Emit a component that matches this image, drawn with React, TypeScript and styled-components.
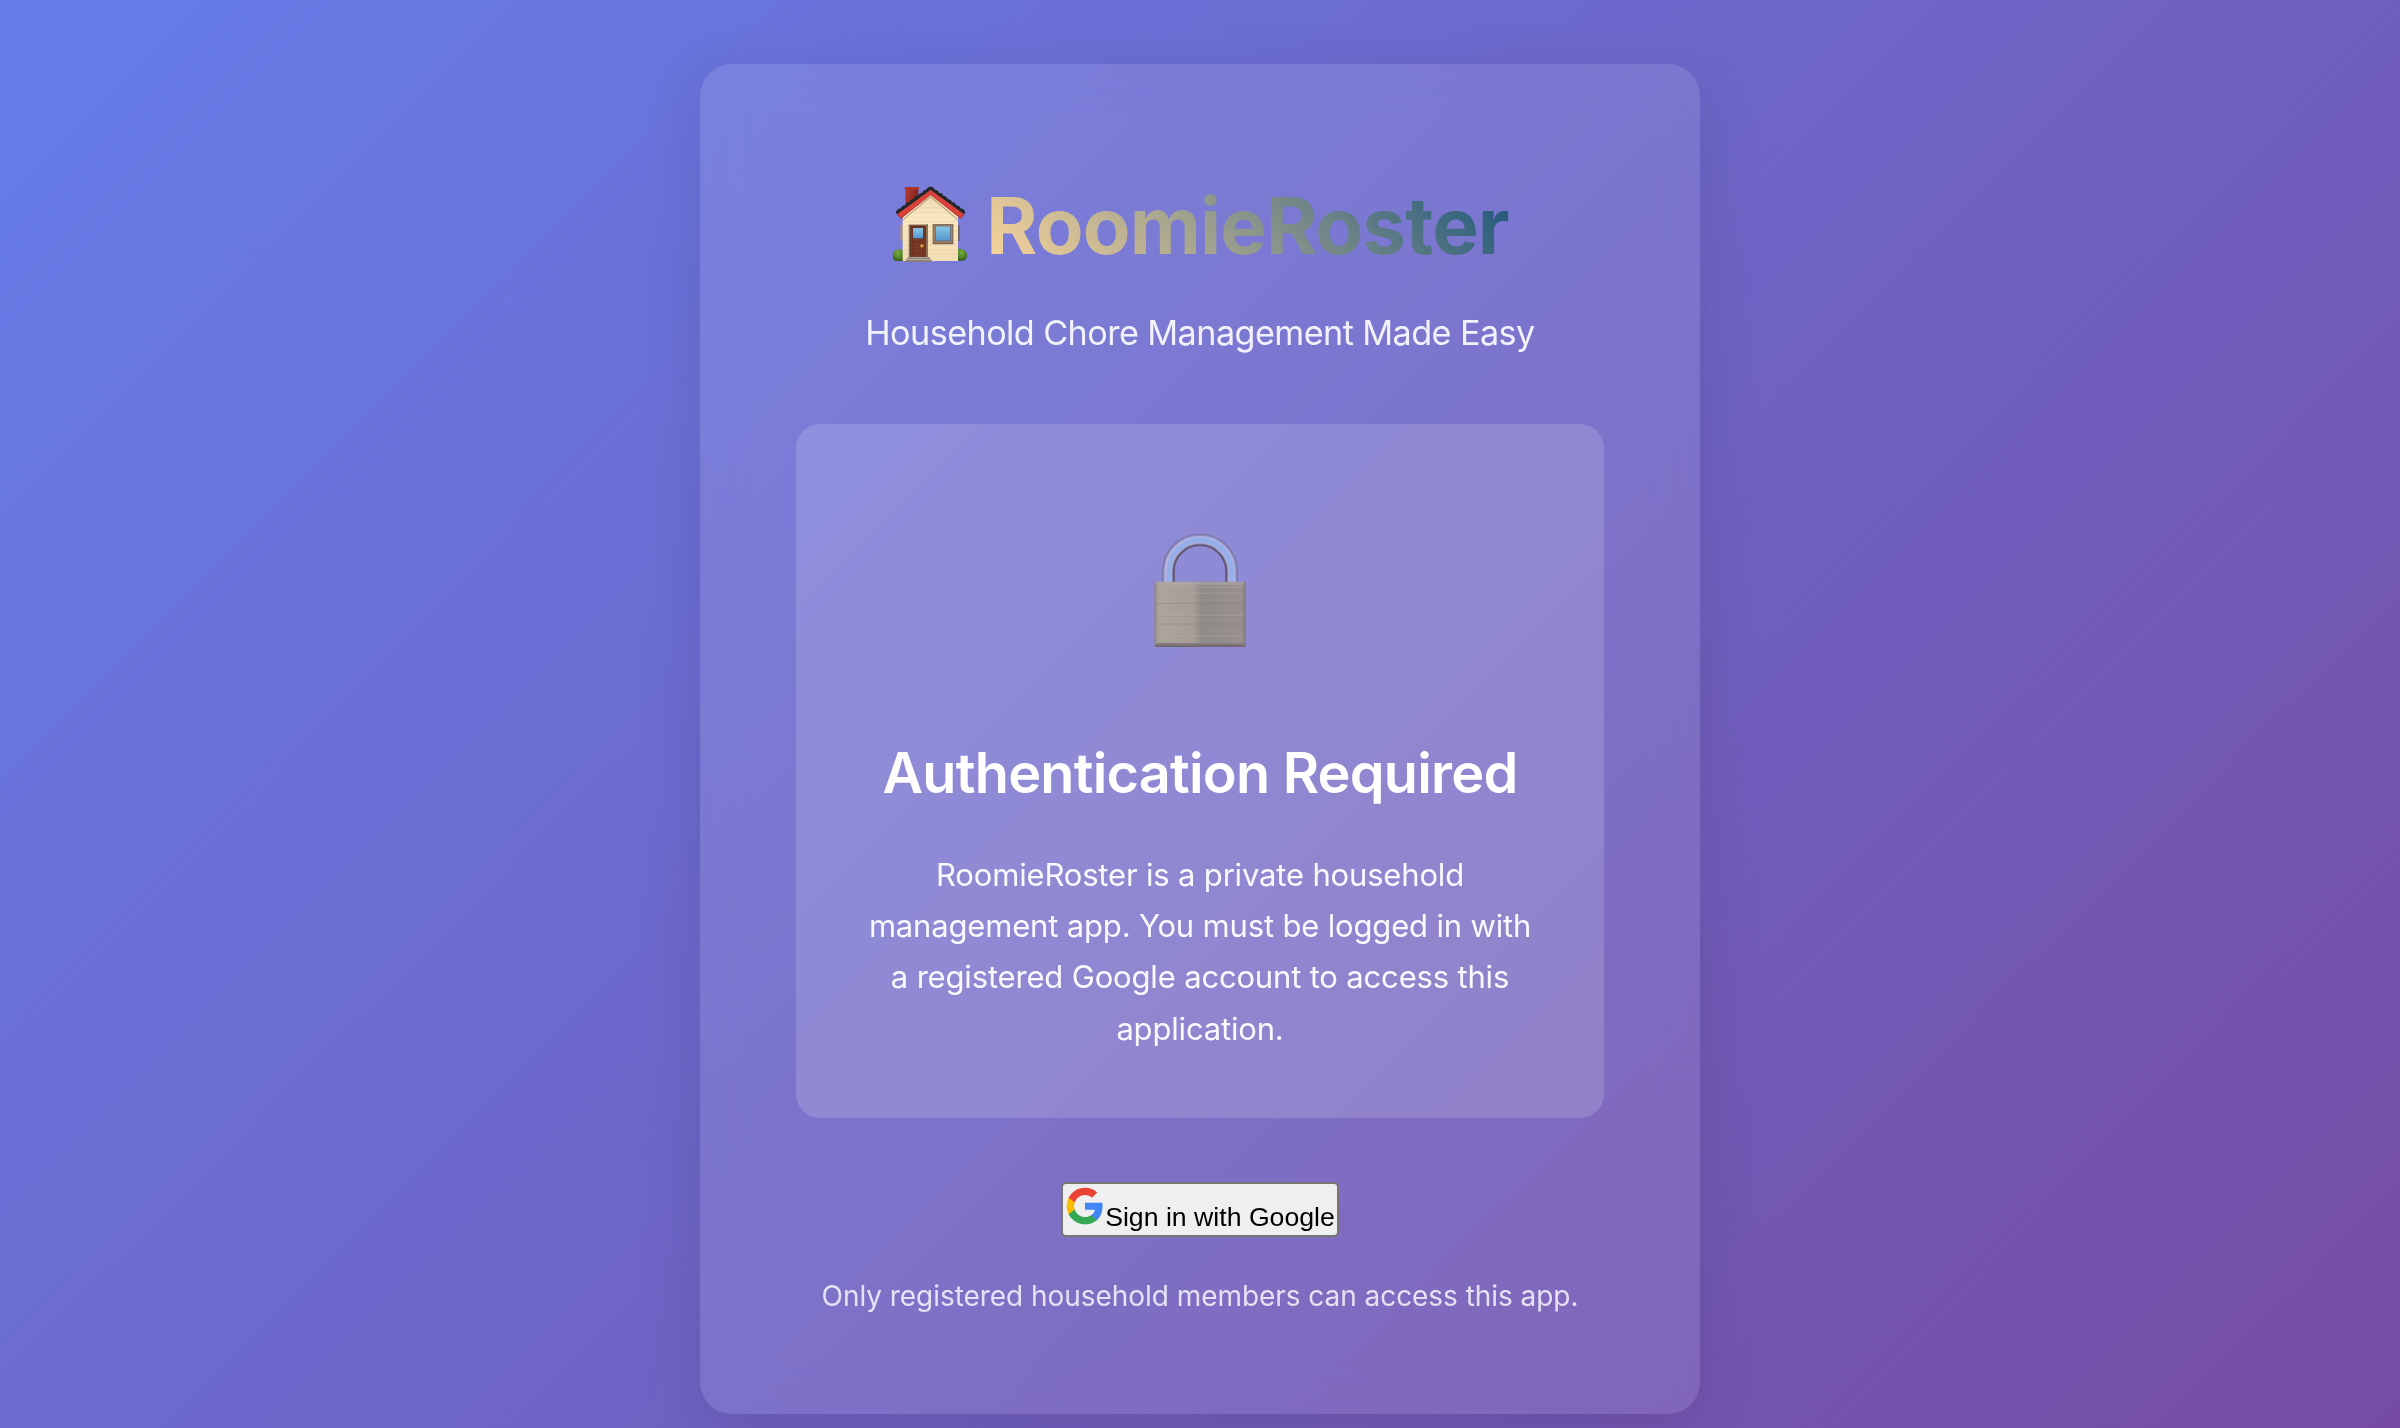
import React from 'react';
import styled, { createGlobalStyle } from 'styled-components';

const GlobalStyle = createGlobalStyle`
  *, *::before, *::after { box-sizing: border-box; }
  html, body { margin: 0; height: 100vh; overflow: hidden; }
  body { font-family: Inter, "Noto Sans", sans-serif; color: #fff; }
  h1, h2, p { margin: 0; }
`;

const Page = styled.div`
  display: flex;
  justify-content: center;
  align-items: flex-start;
  height: 1478px;
  padding: 64px;
  background: linear-gradient(135deg, #667eea 0%, #764ba2 100%);
`;

const Card = styled.main`
  display: flex;
  flex-direction: column;
  align-items: center;
  width: 1000px;
  height: 1350px;
  padding: 96px;
  border-radius: 32px;
  background: rgba(255, 255, 255, 0.1);
  backdrop-filter: blur(20px);
  box-shadow: 0 16px 64px rgba(0, 0, 0, 0.11);
  text-align: center;
`;

const Title = styled.h1`
  display: flex;
  justify-content: center;
  align-items: flex-start;
  gap: 15px;
  height: 128px;
  font-size: 78px;
  font-weight: 700;
  line-height: 132px;
  letter-spacing: -0.84px;
  white-space: nowrap;
`;

const HouseIcon = styled.svg`
  width: 80px;
  height: 84px;
  margin-top: 18px;
`;

const GradientText = styled.span`
  background: linear-gradient(45deg, #ffd89b 0%, #19547b 100%);
  background-clip: text;
  -webkit-background-clip: text;
  -webkit-text-fill-color: transparent;
`;

const Tagline = styled.p`
  margin-top: 17px;
  font-size: 34.2px;
  line-height: 56px;
  letter-spacing: -0.57px;
  color: rgba(255, 255, 255, 0.9);
`;

const Panel = styled.section`
  display: flex;
  flex-direction: column;
  align-items: center;
  width: 808px;
  height: 694px;
  margin-top: 63px;
  padding: 64px;
  border-radius: 24px;
  background: rgba(255, 255, 255, 0.15);
`;

const LockIcon = styled.svg`
  flex: none;
  width: 100px;
  height: 120px;
  margin: 42px 0 77px;
`;

const PanelTitle = styled.h2`
  font-size: 55.8px;
  font-weight: 600;
  line-height: 92px;
  letter-spacing: -0.77px;
  white-space: nowrap;
`;

const PanelText = styled.p`
  margin-top: 30px;
  font-size: 31px;
  line-height: 51.2px;
  letter-spacing: -0.17px;
  color: rgba(255, 255, 255, 0.95);
`;

const SignInButton = styled.button`
  margin-top: 64px;
  padding: 2px;
  border: 2px solid #767676;
  border-radius: 5px;
  background: #efefef;
  color: #000;
  font: 26.667px "Liberation Sans", Arial, sans-serif;
  white-space: nowrap;
`;

const GoogleLogo = styled.svg`
  width: 40px;
  height: 40px;
`;

const Note = styled.p`
  margin-top: 36px;
  font-size: 28px;
  line-height: 46px;
  letter-spacing: -0.05px;
  color: rgba(255, 255, 255, 0.8);
  white-space: nowrap;
`;

const House = () => (
  <HouseIcon viewBox="33 9 240 252" aria-hidden="true">
    <defs>
      <linearGradient id="chimney" x1="0" x2="1" y1="0" y2="0.4">
        <stop offset="0" stopColor="#bd3e33" />
        <stop offset="1" stopColor="#7c211d" />
      </linearGradient>
      <linearGradient id="wall" x1="0" x2="0" y1="0" y2="1">
        <stop offset="0" stopColor="#ecd9b0" />
        <stop offset="0.35" stopColor="#fbe8c2" />
        <stop offset="1" stopColor="#f3ddb4" />
      </linearGradient>
      <linearGradient id="glass" x1="0" x2="0" y1="0" y2="1">
        <stop offset="0" stopColor="#86c6e6" />
        <stop offset="1" stopColor="#5597cf" />
      </linearGradient>
      <radialGradient id="bush" cx="0.45" cy="0.3" r="0.75">
        <stop offset="0" stopColor="#7cab41" />
        <stop offset="0.6" stopColor="#4f8128" />
        <stop offset="1" stopColor="#2f5417" />
      </radialGradient>
    </defs>
    <path d="M38 243c0-11 6-19 15-19 5-4 18 0 20 10v24H50c-8 0-12-6-12-15z" fill="url(#bush)" />
    <path d="M230 224c6-5 15-3 19 0 8 1 12 9 12 16 0 10-5 17-12 17h-19z" fill="url(#bush)" />
    <rect x="61" y="150" width="8" height="47" fill="#a58d8b" />
    <rect x="232" y="150" width="7" height="48" fill="#6d5e66" />
    <rect x="76" y="38" width="39" height="62" fill="url(#chimney)" />
    <rect x="74" y="36" width="43" height="8" rx="2" fill="#a93429" />
    <path d="M68 122 152 54l82 68v136H68z" fill="url(#wall)" />
    <path
      d="M120 98h64M103 112h98M86 126h130M69 140h164M69 154h164M69 168h164M69 182h164M69 196h164M69 210h164M69 224h164M69 238h164"
      stroke="#dfca9e"
      strokeWidth="1.2"
    />
    <path d="m68 135 84-70 82 70" fill="none" stroke="#8f7350" strokeWidth="4" opacity="0.5" />
    <path d="m49 115 103-75 102 75" fill="none" stroke="#22272a" strokeWidth="9" />
    <path d="m152 38-101 73M152 38l101 73" fill="none" stroke="#22272a" strokeWidth="9" strokeDasharray="11 5" />
    <path d="M51 119 152 45l101 74-11 12-90-71-89 71z" fill="#99251f" />
    <path d="m52 118 100-73 100 73-10 11-90-70-89 70z" fill="#d9413a" />
    <rect x="86" y="147" width="58" height="101" fill="#8d7058" />
    <rect x="87" y="147" width="53" height="3" fill="#c9ad8b" />
    <rect x="91" y="152" width="46" height="96" fill="#47200f" />
    <rect x="93" y="154" width="42" height="93" fill="#7a3926" />
    <path d="M99 200h30v37H99z" fill="none" stroke="#642c1c" strokeWidth="2" />
    <rect x="97" y="157" width="34" height="35" fill="#5c3022" />
    <rect x="99" y="159" width="30" height="31" fill="url(#glass)" />
    <circle cx="126" cy="213" r="5.5" fill="#c48522" />
    <circle cx="125" cy="211.500" r="2.500" fill="#ffe695" />
    <rect x="158" y="147" width="62" height="61" rx="1" fill="#77604e" />
    <rect x="161" y="149" width="56" height="54" fill="#a38669" />
    <rect x="165" y="152" width="48" height="47" fill="#665750" />
    <rect x="167" y="154" width="44" height="43" fill="url(#glass)" />
    <path d="M82 246h68v6H82z" fill="#8b837b" />
    <path d="M77 252h77v9H77z" fill="#8b7e7a" />
    <path d="M78 252h75v3H78zM83 246h66v2H83z" fill="#b7aea5" />
  </HouseIcon>
);

const Lock = () => (
  <LockIcon viewBox="60 60 300 360" aria-hidden="true">
    <defs>
      <linearGradient id="body" x1="0" x2="1" y1="0" y2="0">
        <stop offset="0" stopColor="#9b948c" />
        <stop offset="0.06" stopColor="#aca59b" />
        <stop offset="0.42" stopColor="#a69e97" />
        <stop offset="0.52" stopColor="#908a89" />
        <stop offset="0.95" stopColor="#989190" />
        <stop offset="1" stopColor="#88807f" />
      </linearGradient>
      <linearGradient id="base" x1="0" x2="0" y1="0" y2="1">
        <stop offset="0" stopColor="#8f8585" />
        <stop offset="1" stopColor="#6e616c" />
      </linearGradient>
    </defs>
    <g fill="none">
      <path d="M115 218V184a95 95 0 0 1 190 0V218" stroke="#77719a" strokeWidth="37" />
      <path d="M115 218V184a95 95 0 0 1 190 0V218" stroke="#8c89bf" strokeWidth="32" />
      <path d="M115 218V184a95 95 0 0 1 190 0V218" stroke="#a9afe2" strokeWidth="24" />
      <path d="M117 218V184a93 93 0 0 1 186 0V218" stroke="#93b0ea" strokeWidth="14" />
      <path d="M107 218V184a103 103 0 0 1 50-88" stroke="#b9b3e0" strokeWidth="6" opacity="0.8" />
      <path d="M125 218V184a85 85 0 0 1 170 0V218" stroke="#b3add9" strokeWidth="5" />
      <path d="M129 218V184a81 81 0 0 1 162 0V218" stroke="#7d779b" strokeWidth="5" />
      <path d="M132 218V184a78 78 0 0 1 156 0V218" stroke="#575168" strokeWidth="4" />
    </g>
    <rect x="74" y="215" width="273" height="195" rx="3" fill="url(#body)" />
    <path d="M75 216h271l-9 8H84z" fill="#b0a9aa" opacity="0.6" />
    <path d="M79 231h263M79 250h263M79 316h263M79 378h263" stroke="#bdb5aa" strokeWidth="2.500" opacity="0.4" />
    <path d="M77 280h267M77 342h267" stroke="#797270" strokeWidth="2.500" opacity="0.4" />
    <path d="M77 254h267M77 320h267M77 382h267" stroke="#857e79" strokeWidth="1.500" opacity="0.3" />
    <path d="m74 406 10-8h254l9 8-3 5H77z" fill="url(#base)" />
    <path d="M75 218v188M346 218v188" stroke="#7d7574" strokeWidth="2" />
  </LockIcon>
);

const Google = () => (
  <GoogleLogo viewBox="0 0 24 24" aria-hidden="true">
    <path fill="#4285F4" d="M22.560 12.250c0-.78-.07-1.530-.2-2.250H12v4.260h5.920c-.26 1.370-1.040 2.530-2.210 3.310v2.770h3.570c2.080-1.920 3.280-4.740 3.280-8.090z" />
    <path fill="#34A853" d="M12 23c2.970 0 5.460-.98 7.280-2.660l-3.570-2.770c-.98.66-2.230 1.060-3.710 1.060-2.860 0-5.290-1.930-6.160-4.530H2.180v2.840C3.990 20.530 7.700 23 12 23z" />
    <path fill="#FBBC05" d="M5.840 14.090c-.22-.66-.35-1.360-.35-2.090s.13-1.430.35-2.090V7.070H2.180C1.430 8.550 1 10.220 1 12s.43 3.450 1.180 4.930l2.850-2.220.81-.62z" />
    <path fill="#EA4335" d="M12 5.380c1.620 0 3.060.56 4.210 1.640l3.150-3.150C17.450 2.090 14.970 1 12 1 7.700 1 3.990 3.470 2.180 7.070l3.660 2.840c.87-2.600 3.300-4.530 6.160-4.530z" />
  </GoogleLogo>
);

export default function App() {
  return (
    <>
      <GlobalStyle />
      <Page>
        <Card>
          <Title>
            <House />
            <div>
              <GradientText>RoomieRoster</GradientText>
            </div>
          </Title>
          <Tagline>Household Chore Management Made Easy</Tagline>
          <Panel>
            <Lock />
            <PanelTitle>Authentication Required</PanelTitle>
            <PanelText>
              RoomieRoster is a private household management app. You must be logged in with a
              registered Google account to access this application.
            </PanelText>
          </Panel>
          <SignInButton type="button">
            <Google />
            Sign in with Google
          </SignInButton>
          <Note>Only registered household members can access this app.</Note>
        </Card>
      </Page>
    </>
  );
}
